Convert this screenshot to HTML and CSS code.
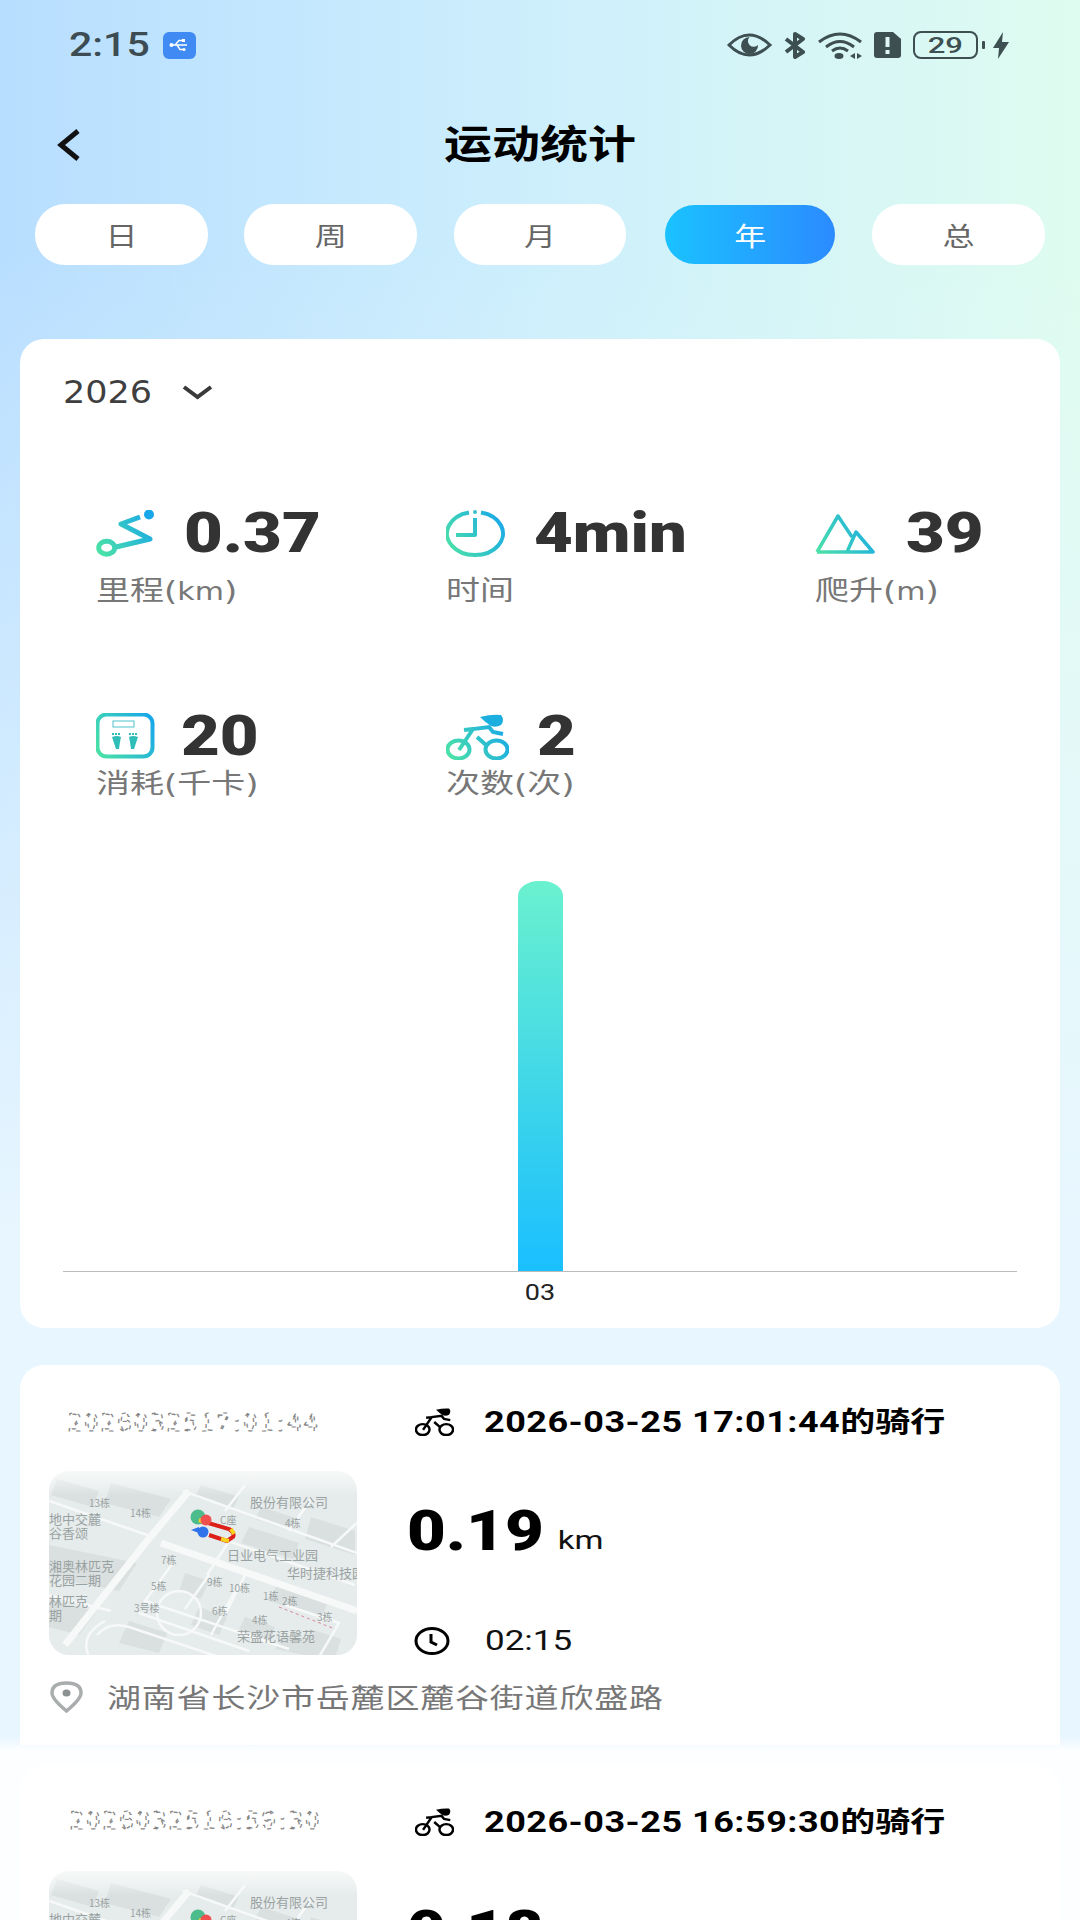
FILE: index.html
```html
<!DOCTYPE html>
<html lang="zh-CN">

<head>
    <meta charset="UTF-8">
    <meta name="viewport" content="width=device-width, initial-scale=1.0">
    <title>运动统计</title>
    <link rel="stylesheet" href="styles.css">
</head>

<body>

    <svg class="defs" width="0" height="0">
        <defs>
            <linearGradient id="iconGrad" gradientUnits="userSpaceOnUse" x1="0" y1="47" x2="60" y2="10">
                <stop offset="0" stop-color="#4fe6a2" />
                <stop offset="1" stop-color="#17a6ea" />
            </linearGradient>
            <symbol id="bike" viewBox="0 0 63 46" preserveAspectRatio="none">
                <path class="bike-lines" d="M13 36 L27 15 L43 13 L47 18 L57 20 M18 16 L27 15 M31 23 L40 31" />
                <ellipse class="bike-lines" cx="12.5" cy="35.5" rx="11" ry="9" />
                <ellipse class="bike-lines" cx="50.5" cy="35.5" rx="11" ry="9" />
                <path class="bike-head" d="M34 3 Q46 0 55 1 Q59 6 55 11 Q50 14 45 12 Q40 9 34 3 Z" />
            </symbol>
            <clipPath id="mapClip">
                <rect x="0" y="76" width="308" height="184" rx="20" />
            </clipPath>
            <linearGradient id="mapFade" x1="0" y1="0" x2="0" y2="1">
                <stop offset="0" stop-color="#fff" stop-opacity="0.9" />
                <stop offset="0.6" stop-color="#fff" stop-opacity="0.45" />
                <stop offset="1" stop-color="#fff" stop-opacity="0" />
            </linearGradient>
            <symbol id="map" viewBox="0 0 308 265">
                <g clip-path="url(#mapClip)">
                    <rect class="map-bg" x="0" y="40" width="308" height="220" />
                    <!-- blocks -->
                    <path class="map-block" d="M8 84 L50 96 L44 112 L2 100 Z M62 88 L122 104 L110 122 L56 108 Z M152 90 L190 102 L184 114 L146 102 Z" />
                    <path class="map-block" d="M212 112 L250 124 L244 136 L206 124 Z M262 122 L306 136 L306 160 L256 144 Z M200 132 L250 148 L244 164 L192 148 Z" />
                    <path class="map-block" d="M0 150 L88 168 L70 196 L0 182 Z M0 206 L48 216 L30 240 L0 232 Z" />
                    <path class="map-block" d="M136 178 L160 186 L152 204 L130 196 Z M150 212 L178 222 L170 240 L142 230 Z M80 226 L118 238 L110 258 L70 248 Z" />
                    <path class="map-block" d="M228 190 L280 206 L272 222 L220 206 Z M236 240 L290 252 L284 266 L226 254 Z" />
                    <path class="map-block" d="M196 222 L226 232 L222 244 L190 234 Z M262 234 L292 244 L288 256 L258 246 Z" />
                    <!-- roads -->
                    <path class="map-road-wide" d="M140 96 L98 146 L16 250" />
                    <path class="map-road-wide" d="M112 148 L308 216" />
                    <path class="map-road" d="M0 106 L104 142 M134 96 L308 158 M0 200 L62 216" />
                    <path class="map-road" d="M196 90 L176 116 M150 136 L306 190 M262 104 L240 136 M310 126 L282 152 M184 140 L158 180" />
                    <path class="map-road" d="M124 168 L96 206 L240 254 M90 218 L200 256 M160 180 L136 214 M186 196 L162 240 M236 210 L290 228 L270 262 M196 180 L176 220" />
                    <path class="map-road" d="M48 240 Q60 226 80 232 L176 264 M40 262 Q30 240 56 226" />
                    <ellipse class="map-road" cx="130" cy="218" rx="22" ry="22" />
                    <path class="map-dash" d="M230 212 L286 234" />
                    <!-- labels -->
                    <text class="map-label" x="40" y="112">13栋</text>
                    <text class="map-label" x="81" y="122">14栋</text>
                    <text class="map-label map-label-big" x="201" y="112">股份有限公司</text>
                    <text class="map-label" x="171" y="129">C座</text>
                    <text class="map-label" x="236" y="132">4栋</text>
                    <text class="map-label map-label-big" x="0" y="129">地中交麓</text>
                    <text class="map-label map-label-big" x="0" y="143">谷香颂</text>
                    <text class="map-label map-label-big" x="178" y="165">日业电气工业园</text>
                    <text class="map-label map-label-big" x="238" y="183">华时捷科技园</text>
                    <text class="map-label" x="112" y="169">7栋</text>
                    <text class="map-label map-label-big" x="0" y="176">湘奥林匹克</text>
                    <text class="map-label map-label-big" x="0" y="190">花园二期</text>
                    <text class="map-label" x="102" y="195">5栋</text>
                    <text class="map-label" x="158" y="191">9栋</text>
                    <text class="map-label" x="180" y="197">10栋</text>
                    <text class="map-label" x="214" y="205">1栋</text>
                    <text class="map-label" x="233" y="210">2栋</text>
                    <text class="map-label map-label-big" x="0" y="211">林匹克</text>
                    <text class="map-label map-label-big" x="0" y="225">期</text>
                    <text class="map-label" x="85" y="217">3号楼</text>
                    <text class="map-label" x="163" y="220">6栋</text>
                    <text class="map-label" x="203" y="229">4栋</text>
                    <text class="map-label" x="268" y="226">3栋</text>
                    <text class="map-label map-label-big" x="188" y="246">荣盛花语馨苑</text>
                    <!-- route -->
                    <circle class="map-start" cx="149" cy="122" r="7.5" />
                    <path class="map-route" d="M152 126 L180 134 Q186 138 184 142 L178 146 L160 140" />
                    <path class="map-route-alt" d="M150 125 L156 127 M172 144 L180 146 M182 134 L185 139" />
                    <circle class="map-end" cx="157" cy="125" r="5.5" />
                    <circle class="map-now" cx="154" cy="137" r="5.5" />
                    <path class="map-now" d="M142 135 L150 132 L150 138 Z" />
                </g>
                <rect x="0" y="66" width="308" height="34" fill="url(#mapFade)" />
            </symbol>
        </defs>
    </svg>

    <div class="page">

        <div class="status-bar">
            <div class="status-left">
                <span class="status-time">2:15</span>
                <span class="usb-badge">
                    <svg width="20" height="14" viewBox="0 0 20 14">
                        <path d="M1 7 H18 M6 7 L10 2.5 H13 M8 7 L11 11.5 H14" fill="none" stroke="#fff" stroke-width="1.4" />
                        <circle cx="2.5" cy="7" r="2" fill="#fff" />
                        <rect x="13" y="1" width="3" height="3" fill="#fff" />
                        <circle cx="15" cy="11.5" r="1.6" fill="#fff" />
                    </svg>
                </span>
            </div>
            <div class="status-right">
                <svg class="status-eye" width="45" height="24" viewBox="0 0 45 24">
                    <path d="M2 12 Q22 -8 43 12 Q22 32 2 12 Z" fill="none" stroke="#3e4f52" stroke-width="3" />
                    <path d="M22.500 4 A8.500 8.500 0 1 0 31 12 A5 5 0 0 1 22.500 4 Z" fill="#3e4f52" />
                </svg>
                <svg class="status-bt" width="23" height="27" viewBox="0 0 23 27">
                    <path d="M3 7 L20 20 L12 25 V2 L20 7 L3 20" fill="none" stroke="#3e4f52" stroke-width="4" stroke-linejoin="round" />
                </svg>
                <svg class="status-wifi" width="44" height="27" viewBox="0 0 44 27">
                    <path d="M1 10 Q22 -6 43 10 M8 15 Q22 4 36 15 M14 19 Q22 13 30 19" fill="none" stroke="#3e4f52" stroke-width="3" />
                    <ellipse cx="21" cy="24" rx="4.500" ry="3" fill="#3e4f52" />
                    <path d="M32 24 L37 21 V27 Z M39 21 L44 24 L39 27 Z" fill="#3e4f52" />
                </svg>
                <svg class="status-sim" width="27" height="26" viewBox="0 0 27 26">
                    <path d="M3 0 H19 L27 7 V23 Q27 26 24 26 H3 Q0 26 0 23 V3 Q0 0 3 0 Z" fill="#3e4f52" />
                    <rect x="11.500" y="5" width="4" height="10" fill="#e0f8f5" />
                    <rect x="11.500" y="18" width="4" height="4" fill="#e0f8f5" />
                </svg>
                <span class="battery"><span class="battery-num">29</span></span>
                <span class="battery-tip"></span>
                <svg class="status-bolt" width="16" height="27" viewBox="0 0 16 27">
                    <path d="M10 0 L0 16 H6 L5 27 L16 10 H9 Z" fill="#3e4f52" />
                </svg>
            </div>
        </div>

        <div class="nav">
            <svg class="nav-back" width="24" height="34" viewBox="0 0 24 34">
                <path d="M21 3 L4 17 L21 31" fill="none" stroke="#111" stroke-width="5" />
            </svg>
            <h1 class="nav-title"><span class="sq">运动统计</span></h1>
        </div>

        <div class="tabs">
            <div class="tab"><span class="sq">日</span></div>
            <div class="tab"><span class="sq">周</span></div>
            <div class="tab"><span class="sq">月</span></div>
            <div class="tab tab-active"><span class="sq">年</span></div>
            <div class="tab"><span class="sq">总</span></div>
        </div>

        <div class="summary-card">
            <div class="year-row">
                <span class="year-text">2026</span>
                <svg width="31" height="15" viewBox="0 0 31 15">
                    <path d="M2 2 L15.500 12 L29 2" fill="none" stroke="#3a3a3a" stroke-width="4" />
                </svg>
            </div>

            <div class="stats">
                <div class="stat">
                    <div class="stat-top">
                        <svg class="stat-icon" width="60" height="47" viewBox="0 0 60 47">
                            <ellipse class="icon-line icon-thick" cx="10.700" cy="37.700" rx="8" ry="6.500" />
                            <path class="icon-line icon-thick" d="M20 37 L54 29 L25 14 L44 7" />
                            <circle cx="53" cy="4.500" r="5" fill="#17a6ea" />
                        </svg>
                        <span class="stat-value">0.37</span>
                    </div>
                    <div class="stat-label"><span class="sq">里程(<span class="label-unit">km</span>)</span></div>
                </div>
                <div class="stat">
                    <div class="stat-top">
                        <svg class="stat-icon" width="60" height="47" viewBox="0 0 60 47">
                            <path class="icon-line" d="M23 2.500 A28 21.500 0 1 0 35 2.500 M29 8 V25 H10" />
                            <circle cx="29" cy="2" r="2" fill="#3fbfc8" />
                        </svg>
                        <span class="stat-value">4min</span>
                    </div>
                    <div class="stat-label"><span class="sq">时间</span></div>
                </div>
                <div class="stat">
                    <div class="stat-top">
                        <svg class="stat-icon" width="60" height="47" viewBox="0 0 60 47">
                            <path class="icon-line icon-thin" d="M2 42 L23 6 L37 27 M32 42 L41 22 L58 42 Z M2 42 H32" />
                        </svg>
                        <span class="stat-value value-right">39</span>
                    </div>
                    <div class="stat-label"><span class="sq">爬升(<span class="label-unit">m</span>)</span></div>
                </div>
                <div class="stat stat-low">
                    <div class="stat-top">
                        <svg class="stat-icon" width="60" height="47" viewBox="0 0 60 47">
                            <rect class="icon-line" x="1.500" y="1.500" width="55" height="42" rx="9" />
                            <rect x="17" y="8" width="21" height="6" fill="none" stroke="#4cc3cb" stroke-width="1" />
                            <path class="scale-toes" d="M16 21 H25 M33 21 H42" />
                            <path class="scale-foot" d="M16 24 Q21 22 25 24 L24 29 L23 36 H20 L18 30 Z M33 24 Q37 22 42 24 L40 30 L38 36 H35 L34 29 Z" />
                        </svg>
                        <span class="stat-value value-left">20</span>
                    </div>
                    <div class="stat-label"><span class="sq">消耗(千卡)</span></div>
                </div>
                <div class="stat stat-low">
                    <div class="stat-top">
                        <svg class="stat-icon bike-color" width="63" height="46">
                            <use href="#bike" />
                        </svg>
                        <span class="stat-value">2</span>
                    </div>
                    <div class="stat-label"><span class="sq">次数(次)</span></div>
                </div>
            </div>

            <div class="chart">
                <div class="chart-area">
                    <div class="chart-bar"></div>
                </div>
                <div class="chart-label"><span class="sq">03</span></div>
            </div>
        </div>

        <div class="records">
            <div class="record">
                <div class="record-main">
                    <svg class="record-map" width="308" height="265" viewBox="0 0 308 265">
                        <use href="#map" width="308" height="265" />
                        <text class="map-stamp" x="19" y="36">2026032517:01:44</text>
                    </svg>
                    <div class="record-info">
                        <div class="record-title">
                            <svg class="bike-black" width="39" height="28">
                                <use href="#bike" />
                            </svg>
                            <span class="record-name sq">2026-03-25 17:01:44<span class="record-cjk">的骑行</span></span>
                        </div>
                        <div class="record-distance">
                            <span class="record-num">0.19</span>
                            <span class="record-unit sq">km</span>
                        </div>
                        <div class="record-time">
                            <svg width="36" height="28" viewBox="0 0 36 28">
                                <ellipse cx="18" cy="14" rx="16" ry="12.500" fill="none" stroke="#000" stroke-width="3" />
                                <path d="M17 7 V15 L23 18" fill="none" stroke="#000" stroke-width="3" />
                            </svg>
                            <span class="record-duration sq">02:15</span>
                        </div>
                    </div>
                </div>
                <div class="record-place">
                    <svg width="33" height="32" viewBox="0 0 33 32">
                        <path d="M16.500 30 Q2 18 2 12 Q2 2 16.500 2 Q31 2 31 12 Q31 18 16.500 30 Z" fill="none" stroke="#a9adad" stroke-width="3.500" />
                        <ellipse cx="16.500" cy="12" rx="4" ry="3.500" fill="#8b9090" />
                    </svg>
                    <span class="record-address sq">湖南省长沙市岳麓区麓谷街道欣盛路</span>
                </div>
            </div>

            <div class="record">
                <div class="record-main">
                    <svg class="record-map" width="308" height="265" viewBox="0 0 308 265">
                        <use href="#map" width="308" height="265" y="0" />
                        <text class="map-stamp" x="21" y="34">2026032516:59:30</text>
                    </svg>
                    <div class="record-info">
                        <div class="record-title">
                            <svg class="bike-black" width="39" height="28">
                                <use href="#bike" />
                            </svg>
                            <span class="record-name sq">2026-03-25 16:59:30<span class="record-cjk">的骑行</span></span>
                        </div>
                        <div class="record-distance">
                            <span class="record-num">0.18</span>
                        </div>
                    </div>
                </div>
            </div>
        </div>

    </div>

</body>

</html>
```

FILE: styles.css
```css
* {
    box-sizing: border-box;
}

body {
    margin: 0;
    font-family: Roboto, "Noto Sans CJK SC", sans-serif;
}

.defs {
    display: block;
}

.page {
    width: 1080px;
    height: 1920px;
    overflow: hidden;
    background:
        linear-gradient(180deg, rgba(232, 246, 255, 0) 250px, #e8f6ff 1250px),
        linear-gradient(90deg, #b8deff 0%, #cdeffc 50%, #dffcf0 100%);
}

/* the whole screenshot is a bit flattened, so text gets squashed to match */
.sq {
    display: inline-block;
    transform: scaleY(0.8);
}

.status-bar {
    height: 90px;
    padding: 0 71px 0 69px;
    display: flex;
    justify-content: space-between;
    align-items: center;
}

.status-left {
    display: flex;
    align-items: center;
    gap: 13px;
}

.status-time {
    font-size: 41px;
    font-weight: 500;
    line-height: 40px;
    color: #3d4c52;
    display: inline-block;
    transform: scaleY(0.82);
}

.usb-badge {
    width: 33px;
    height: 27px;
    border-radius: 6px;
    background-color: #3f8bf3;
    display: flex;
    align-items: center;
    justify-content: center;
}

.status-right {
    display: flex;
    align-items: center;
}

.status-eye {
    margin-right: 11px;
}

.status-bt {
    margin-right: 12px;
}

.status-wifi {
    margin-right: 12px;
}

.status-sim {
    margin-right: 12px;
}

.battery {
    width: 65px;
    height: 28px;
    border: 2px solid #3e4f52;
    border-radius: 8px;
    display: flex;
    align-items: center;
    justify-content: center;
}

.battery-num {
    font-size: 27px;
    font-weight: 500;
    color: #3e4f52;
    display: inline-block;
    transform: scale(1.15, 0.85);
}

.battery-tip {
    width: 3px;
    height: 8px;
    margin: 0 8px 0 4px;
    background-color: #3e4f52;
    border-radius: 1px;
}

.nav {
    height: 110px;
    padding-left: 57px;
    display: grid;
    grid-template-columns: 1fr auto 1fr;
    padding-right: 57px;
    align-items: center;
}

.nav-title {
    margin: 0;
    font-size: 48px;
    font-weight: 700;
    line-height: 50px;
    color: #000;
}

.tabs {
    margin-top: 4px;
    padding: 0 35px;
    height: 61px;
    display: flex;
    gap: 36.5px;
    align-items: center;
}

.tab {
    width: 173px;
    height: 61px;
    border-radius: 30px;
    background-color: #fff;
    color: #666;
    font-size: 32px;
    display: flex;
    align-items: center;
    justify-content: center;
}

.tab-active {
    width: 170px;
    height: 59px;
    margin: 0 0.5px 0 2.5px;
    color: #fff;
    background: linear-gradient(90deg, #1ac2ff, #2b8bff);
}

.summary-card {
    margin: 74px 20px 0;
    height: 989px;
    background-color: #fff;
    border-radius: 24px;
    display: flex;
    flex-direction: column;
}

.year-row {
    height: 106px;
    padding-left: 43px;
    display: flex;
    align-items: center;
    gap: 30px;
}

.year-text {
    font-family: "DejaVu Sans", sans-serif;
    font-size: 35px;
    line-height: 40px;
    color: #3f3f3f;
    display: inline-block;
    transform: scaleY(0.9);
}

.stats {
    margin-top: 65px;
    padding-left: 76px;
    display: grid;
    grid-template-columns: 350px 369px 1fr;
    grid-template-rows: 203px auto;
}

.stat-top {
    height: 47px;
    display: flex;
    align-items: center;
}

.stat-icon {
    flex-shrink: 0;
    margin-right: 28px;
}

.icon-line {
    fill: none;
    stroke: url(#iconGrad);
    stroke-width: 4;
    stroke-linejoin: round;
}

.icon-thick {
    stroke-width: 5;
}

.icon-thin {
    stroke-width: 3.5;
}

.scale-toes {
    fill: none;
    stroke: #2fbdb8;
    stroke-width: 2;
    stroke-dasharray: 2 1;
}

.scale-foot {
    fill: #2fbdb8;
}

.stat-value {
    display: inline-block;
    font-size: 67px;
    font-weight: 900;
    line-height: 47px;
    color: #333;
    transform: scaleY(0.82);
}

.value-right {
    margin-left: 3px;
}

.value-left {
    margin-left: -3px;
}

.stat-label {
    margin-top: 18px;
    height: 30px;
    line-height: 30px;
    font-family: "DejaVu Sans", "Noto Sans CJK SC", sans-serif;
    font-size: 34px;
    color: #777;
    white-space: nowrap;
}

.label-unit {
    font-size: 30px;
}

.stat-low .stat-label {
    margin-top: 8px;
}

.bike-lines {
    fill: none;
    stroke-width: 4;
    stroke: inherit;
}

.bike-head {
    fill: inherit;
    stroke: none;
}

.bike-color {
    stroke: url(#iconGrad);
    fill: #1caedf;
}

.bike-black {
    stroke: #000;
    fill: #000;
    flex-shrink: 0;
}

.chart {
    margin: auto 43px 20px;
}

.chart-area {
    height: 391px;
    border-bottom: 1px solid #bbb;
    display: flex;
    justify-content: center;
    align-items: flex-end;
}

.chart-bar {
    width: 45px;
    height: 390px;
    border-radius: 20px 20px 0 0 / 15px 15px 0 0;
    background: linear-gradient(180deg, #6af1cf, #1abfff);
}

.chart-label {
    margin-top: 6px;
    height: 30px;
    line-height: 30px;
    font-size: 27px;
    color: #222;
    text-align: center;
}

.records {
    margin-top: 37px;
    padding: 0 20px;
    background: linear-gradient(180deg, rgba(252, 254, 255, 0) 372px, #fcfeff 385px);
}

.record {
    height: 380px;
    margin-bottom: 20px;
    padding: 30px 29px 0;
    background-color: #fff;
    border-radius: 24px 24px 0 0;
}

.record-main {
    display: grid;
    grid-template-columns: 308px 1fr;
    column-gap: 54px;
}

.record-map {
    display: block;
}

.map-stamp {
    font-family: "Liberation Serif", serif;
    font-size: 27px;
    letter-spacing: 3px;
    fill: none;
    stroke: #5a5a5a;
    stroke-width: 1.2;
    stroke-dasharray: 4 6;
    opacity: 0.75;
}

.map-bg {
    fill: #e6ebeb;
}

.map-block {
    fill: #dadfdf;
}

.map-road-wide {
    fill: none;
    stroke: #f7f9f9;
    stroke-width: 7;
}

.map-road {
    fill: none;
    stroke: #f7f9f9;
    stroke-width: 2.5;
}

.map-dash {
    fill: none;
    stroke: #d98a9c;
    stroke-width: 1;
    stroke-dasharray: 3 3;
}

.map-label {
    font-family: "Noto Sans CJK SC", sans-serif;
    font-size: 10px;
    fill: #99a2a2;
}

.map-label-big {
    font-size: 13px;
}

.map-start {
    fill: #4cbc8d;
}

.map-end {
    fill: #f0514f;
}

.map-now {
    fill: #2f72ea;
}

.map-route {
    fill: none;
    stroke: #dc1f18;
    stroke-width: 4;
}

.map-route-alt {
    fill: none;
    stroke: #f7d21e;
    stroke-width: 4;
}

.record-info {
    min-width: 0;
}

.record-title {
    height: 54px;
    padding-left: 4px;
    display: flex;
    align-items: center;
    gap: 30px;
}

.record-name {
    font-size: 36px;
    font-weight: 700;
    line-height: 40px;
    color: #000;
    white-space: nowrap;
    letter-spacing: 0.5px;
}

.record-cjk {
    font-size: 35px;
    letter-spacing: 0;
}

.record-distance {
    margin-top: 62px;
    margin-left: -4px;
    height: 40px;
    display: flex;
    align-items: flex-end;
    gap: 14px;
}

.record-num {
    display: inline-block;
    font-size: 67px;
    font-weight: 900;
    line-height: 40px;
    color: #000;
    transform: scaleY(0.82);
}

.record-unit {
    font-size: 33px;
    line-height: 30px;
    color: #111;
    position: relative;
    top: 4px;
}

.record-time {
    margin-top: 76px;
    height: 28px;
    padding-left: 3px;
    display: flex;
    align-items: center;
    gap: 35px;
}

.record-duration {
    font-size: 35px;
    line-height: 28px;
    color: #111;
}

.record-place {
    margin-top: 21px;
    padding-left: 1px;
    height: 32px;
    display: flex;
    align-items: center;
    gap: 24px;
}

.record-address {
    font-family: "Noto Sans CJK SC", sans-serif;
    font-size: 34px;
    line-height: 32px;
    letter-spacing: 0.8px;
    color: #777;
    white-space: nowrap;
}
```
